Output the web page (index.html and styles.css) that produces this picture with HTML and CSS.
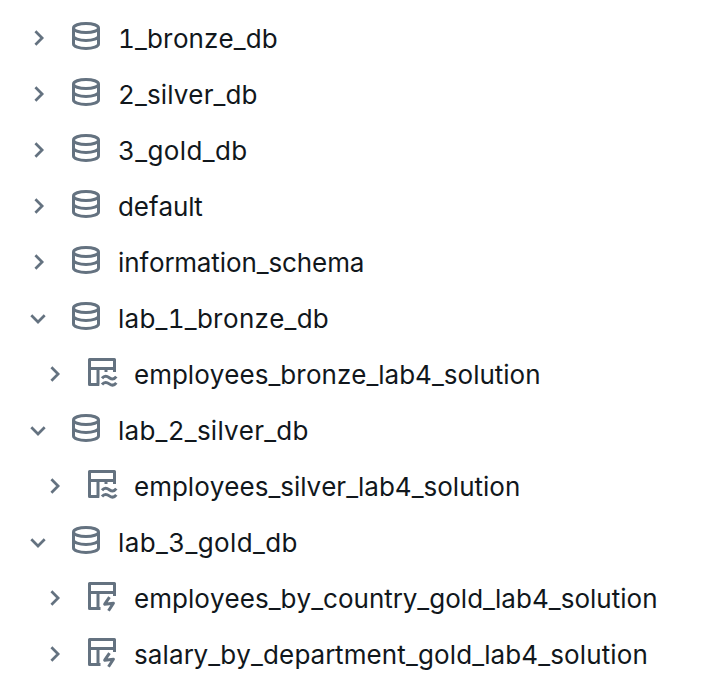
FILE: index.html
```html
<!DOCTYPE html>
<html lang="en"><head><meta charset="utf-8"><title>Schemas</title><link rel="stylesheet" href="styles.css"></head>
<body>
<svg width="0" height="0" class="defs">
<symbol id="right" viewBox="0 0 16 16"><path d="M5.400 1.300 12.100 8 5.400 14.700"/></symbol>
<symbol id="down" viewBox="0 0 16 16"><path d="M1.300 5.300 8 12 14.700 5.300"/></symbol>
<symbol id="db" viewBox="0 0 32 32"><ellipse cx="16" cy="8" rx="12.500" ry="4.600"/><path d="M3.500 8v16c0 2.500 5.600 4.500 12.500 4.500S28.500 26.500 28.500 24V8M3.500 16c0 2.500 5.600 4.500 12.500 4.500S28.500 18.500 28.500 16"/></symbol>
<symbol id="stream" viewBox="0 0 32 32"><path stroke-linejoin="round" d="M13.300 28.500H3.500V3.500h25V16M3.500 12.500h25M12 12.500v16M20 12.500V16"/><path d="M16 22.300c2.500-3 5-2.300 7.300-.6s4.700 2 7-1M16 28.500c2.500-3 5-2.300 7.300-.6s4.700 2 7-1"/></symbol>
<symbol id="bolt" viewBox="0 0 32 32"><path stroke-linejoin="round" d="M14.500 28.500H3.500V3.500h25V16M3.500 12.500h25M12 12.500v16"/><path stroke-linejoin="round" d="M23.500 17.200 18.700 24.200 27.400 23.200 22.500 30.700"/></symbol>
</svg>
<ul class="tree">
<li class="row loose"><svg class="chev"><use href="#right"/></svg><svg class="icon"><use href="#db"/></svg><span class="label">1_bronze_db</span></li>
<li class="row loose"><svg class="chev"><use href="#right"/></svg><svg class="icon"><use href="#db"/></svg><span class="label">2_silver_db</span></li>
<li class="row wider"><svg class="chev"><use href="#right"/></svg><svg class="icon"><use href="#db"/></svg><span class="label">3_gold_db</span></li>
<li class="row tight"><svg class="chev"><use href="#right"/></svg><svg class="icon"><use href="#db"/></svg><span class="label">default</span></li>
<li class="row tight"><svg class="chev"><use href="#right"/></svg><svg class="icon"><use href="#db"/></svg><span class="label">information_schema</span></li>
<li class="row wide"><svg class="chev"><use href="#down"/></svg><svg class="icon"><use href="#db"/></svg><span class="label">lab_1_bronze_db</span></li>
<li class="row child"><svg class="chev"><use href="#right"/></svg><svg class="icon"><use href="#stream"/></svg><span class="label">employees_bronze_lab4_solution</span></li>
<li class="row wide"><svg class="chev"><use href="#down"/></svg><svg class="icon"><use href="#db"/></svg><span class="label">lab_2_silver_db</span></li>
<li class="row child"><svg class="chev"><use href="#right"/></svg><svg class="icon"><use href="#stream"/></svg><span class="label">employees_silver_lab4_solution</span></li>
<li class="row wider"><svg class="chev"><use href="#down"/></svg><svg class="icon"><use href="#db"/></svg><span class="label">lab_3_gold_db</span></li>
<li class="row child slight"><svg class="chev"><use href="#right"/></svg><svg class="icon"><use href="#bolt"/></svg><span class="label">employees_by_country_gold_lab4_solution</span></li>
<li class="row child loose"><svg class="chev"><use href="#right"/></svg><svg class="icon"><use href="#bolt"/></svg><span class="label">salary_by_department_gold_lab4_solution</span></li>
</ul>
</body></html>
```
FILE: styles.css
```css
body { margin: 0; background: #fff; }
.defs { display: block; }
.tree { list-style: none; margin: 0; padding: 10px 0 0 30px; }
.row { display: flex; align-items: center; height: 56px; color: #11171c; font: 26px Inter, sans-serif; font-kerning: none; font-variant-numeric: tabular-nums; }
.child { padding-left: 16px; }
.tight { letter-spacing: -0.1px; }
.slight { letter-spacing: 0.03px; }
.loose { letter-spacing: 0.12px; }
.wide { letter-spacing: 0.25px; }
.wider { letter-spacing: 0.38px; }
svg { fill: none; stroke: #647280; stroke-width: 3; }
.chev { width: 16px; height: 16px; margin-right: 24px; stroke-width: 2.7; }
.icon { width: 32px; height: 32px; margin: 0 16px 4px 0; }
```
